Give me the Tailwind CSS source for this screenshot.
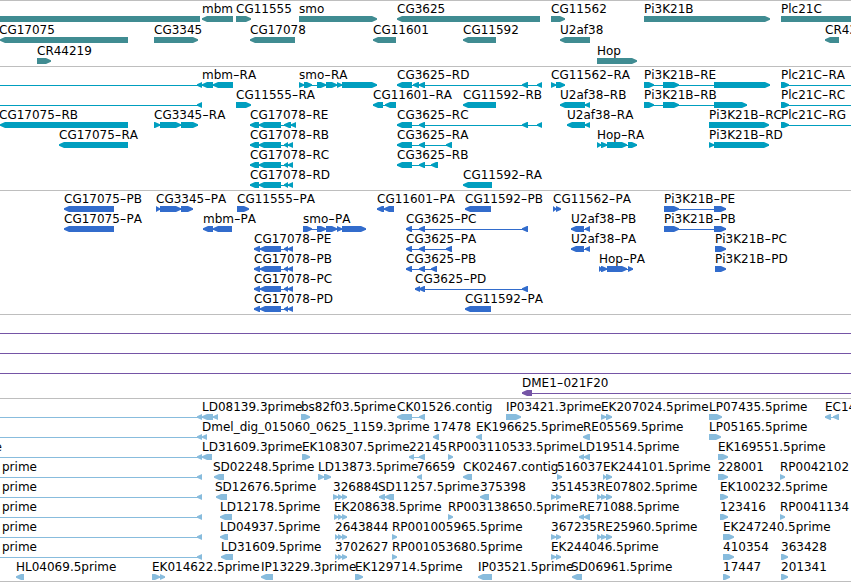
<!DOCTYPE html>
<html lang="en">
<head>
    <meta charset="UTF-8">
    <meta name="viewport" content="width=device-width, initial-scale=1.0">
    <title>Genome Browser</title>
    <script src="https://cdn.jsdelivr.net/npm/@tailwindcss/browser@4"></script>
</head>
<body class="bg-white overflow-hidden">

    <!-- Track list -->
    <main class="flex flex-col w-[851px] h-[582px] overflow-hidden font-['DejaVu_Sans',sans-serif] text-[12px] text-black [font-kerning:none]">
        <section class="shrink-0 h-[66px] border-t border-[#bebebe] text-[#408c92]" data-track="genes"></section>
        <section class="shrink-0 h-[124px] border-t border-[#bebebe] text-[#009ebf]" data-track="transcripts"></section>
        <section class="shrink-0 h-[124px] border-t border-[#bebebe] text-[#326ccc]" data-track="proteins"></section>
        <section class="shrink-0 h-[84px] border-t border-[#bebebe] text-[#7555a6]" data-track="clones"></section>
        <section class="shrink-0 h-[184px] border-y border-[#bebebe] text-[#88bcdd]" data-track="ests"></section>
    </main>

    <script>
        // Feature: [label, direction, [[start, end], ...], lineEnd?, lineStart?, labelX?]
        // direction: -1 left, 1 right, 0 plain bar
        const offLeft = (label) => [label, -1, [[197, 202]], 202, 0, label === 'e' ? -5.5 : 2];
        const cg17078r = (name, end) => [name, -1, [[250, 259], [259, 281], [284, end - 5], [end - 5, end]]];
        const cg17078p = (name) => [name, -1, [[254, 260], [260, 281], [284, 288], [288, 293]]];
        const plc = (name) => [name, 1, [[781, 789]], 851];

        const tracks = {
            genes: { pitch: 21, rows: [
                [['', 0, [[0, 200]]], ['mbm', -1, [[202, 233]]], ['CG11555', 1, [[236, 251]]], ['smo', 1, [[299, 377]]],
                 ['CG3625', -1, [[397, 540]]], ['CG11562', 1, [[551, 565]]], ['Pi3K21B', 1, [[644, 770]]], ['Plc21C', 0, [[781, 851]]]],
                [['CG17075', -1, [[0, 128]], 0, 0, -1], ['CG3345', 1, [[154, 198]]], ['CG17078', -1, [[250, 295]]], ['CG11601', -1, [[373, 396]]],
                 ['CG11592', -1, [[463, 496]]], ['U2af38', -1, [[560, 590]]], ['CR43', -1, [[825, 839]]]],
                [['CR44219', 1, [[37, 51]]], ['Hop', 1, [[597, 637]]]],
            ]},
            transcripts: { pitch: 20, rows: [
                [offLeft(''), ['mbm-RA', -1, [[202, 213], [213, 233]]],
                 ['smo-RA', 1, [[299, 304], [304, 312], [317, 326], [326, 337], [337, 342], [342, 377]]],
                 ['CG3625-RD', -1, [[397, 412], [413, 419], [419, 425], [522, 528], [537, 542]]],
                 ['CG11562-RA', 1, [[551, 556], [556, 565]]],
                 ['Pi3K21B-RE', 1, [[644, 654], [663, 679], [714, 770]]], plc('Plc21C-RA')],
                [offLeft(''), ['CG11555-RA', 1, [[236, 251]]], ['CG11601-RA', -1, [[373, 383], [385, 396]]], ['CG11592-RB', -1, [[463, 496]]],
                 ['U2af38-RB', -1, [[560, 585], [585, 590]]], ['Pi3K21B-RB', 1, [[644, 654], [663, 679], [714, 747]]], plc('Plc21C-RC')],
                [['CG17075-RB', -1, [[0, 128]], 0, 0, -1], ['CG3345-RA', 1, [[154, 160], [160, 181], [181, 198]]], cg17078r('CG17078-RE', 296),
                 ['CG3625-RC', -1, [[397, 412], [419, 425], [522, 528], [537, 542]]], ['U2af38-RA', -1, [[567, 585], [585, 590]]],
                 ['Pi3K21B-RC', 1, [[709, 769]]], plc('Plc21C-RG')],
                [['CG17075-RA', -1, [[59, 128]]], cg17078r('CG17078-RB', 293), ['CG3625-RA', -1, [[397, 412], [419, 425], [446, 452]]],
                 ['Hop-RA', 1, [[597, 601], [601, 607], [607, 627], [628, 637]]], ['Pi3K21B-RD', 1, [[709, 714], [714, 769]]]],
                [cg17078r('CG17078-RC', 293), ['CG3625-RB', -1, [[397, 412], [419, 425], [431, 438]]]],
                [cg17078r('CG17078-RD', 293), ['CG11592-RA', -1, [[463, 492]]]],
            ]},
            proteins: { pitch: 20, rows: [
                [['CG17075-PB', -1, [[64, 114]]], ['CG3345-PA', 1, [[156, 160], [160, 181], [181, 193]]], ['CG11555-PA', 1, [[237, 249]]],
                 ['CG11601-PA', -1, [[377, 384], [384, 394]]], ['CG11592-PB', -1, [[465, 491]]], ['CG11562-PA', 1, [[553, 556], [556, 561]]],
                 ['Pi3K21B-PE', 1, [[664, 679], [714, 726]]]],
                [['CG17075-PA', -1, [[64, 114]]], ['mbm-PA', -1, [[203, 213], [213, 232]]],
                 ['smo-PA', 1, [[303, 312], [317, 326], [326, 337], [337, 342], [342, 366]]],
                 ['CG3625-PC', -1, [[406, 412], [419, 425], [522, 528]]], ['U2af38-PB', -1, [[571, 584], [585, 590]]],
                 ['Pi3K21B-PB', 1, [[664, 679], [714, 726]]]],
                [cg17078p('CG17078-PE'), ['CG3625-PA', -1, [[406, 412], [419, 425], [446, 452]]],
                 ['U2af38-PA', -1, [[571, 584], [585, 590]]], ['Pi3K21B-PC', 1, [[715, 726]]]],
                [cg17078p('CG17078-PB'), ['CG3625-PB', -1, [[406, 412], [419, 425], [431, 437]]],
                 ['Hop-PA', 1, [[599, 602], [601, 607], [607, 627], [628, 633]]], ['Pi3K21B-PD', 1, [[715, 726]]]],
                [cg17078p('CG17078-PC'), ['CG3625-PD', -1, [[415, 420], [419, 425], [522, 528]]]],
                [cg17078p('CG17078-PD'), ['CG11592-PA', -1, [[465, 491]]]],
            ]},
            clones: { pitch: 20, rows: [
                [['', 0, [], 851, 0]],
                [['', 0, [], 851, 0]],
                [['', 0, [], 851, 0]],
                [['DME1-021F20', -1, [[522, 532]], 851]],
            ]},
            ests: { pitch: 20, rows: [
                [offLeft(''), ['LD08139.3prime', -1, [[202, 213], [213, 218]]], ['bs82f03.5prime', 1, [[301, 310]]],
                 ['CK01526.contig', -1, [[397, 412], [419, 425]]], ['IP03421.3prime', 1, [[506, 521]]],
                 ['EK207024.5prime', 1, [[601, 606], [606, 612]]], ['LP07435.5prime', 1, [[709, 722]]], ['EC14', -1, [[825, 831], [833, 839]]]],
                [offLeft(''), ['Dmel_dig_015060_0625_1159.3prime', -1, [[202, 207]]], ['17478', -1, [[433, 439]]],
                 ['EK196625.5prime', -1, [[476, 482]]], ['RE05569.5prime', -1, [[583, 590]]], ['LP05165.5prime', 1, [[709, 721]]]],
                [offLeft('e'), ['LD31609.3prime', -1, [[202, 212]]], ['EK108307.5prime', 1, [[302, 310]]], ['22145', -1, [[409, 414], [419, 425]]],
                 ['RP003110533.5prime', 1, [[448, 453]]], ['LD19514.5prime', -1, [[579, 584], [584, 590]]], ['EK169551.5prime', 1, [[718, 728]]]],
                [offLeft('prime'), ['SD02248.5prime', -1, [[214, 224]], 0, 0, 213], ['LD13873.5prime', 1, [[318, 324], [324, 331]]], ['76659', -1, [[417, 422]]],
                 ['CK02467.contig', -1, [[463, 472]]], ['516037', 1, [[557, 562]]], ['EK244101.5prime', 1, [[603, 606], [606, 612]]],
                 ['228001', 1, [[718, 728]]], ['RP0042102', 1, [[780, 785]]]],
                [offLeft('prime'), ['SD12676.5prime', -1, [[216, 227]], 0, 0, 215], ['326884', 1, [[333, 338], [338, 342], [342, 347]]],
                 ['SD11257.5prime', -1, [[379, 385], [385, 394]], 0, 379, 378], ['375398', -1, [[480, 489]]], ['351453', 1, [[551, 556], [556, 561]]],
                 ['RE07802.5prime', 1, [[597, 601], [601, 606], [606, 612]]], ['EK100232.5prime', 1, [[720, 728]]]],
                [offLeft('prime'), ['LD12178.5prime', -1, [[220, 232]]], ['EK208638.5prime', 1, [[334, 338], [338, 342], [342, 347]]],
                 ['RP003138650.5prime', 1, [[448, 453]]], ['RE71088.5prime', -1, [[579, 584], [584, 590]]],
                 ['123416', 1, [[720, 728]]], ['RP0041134', 1, [[780, 785]]]],
                [offLeft('prime'), ['LD04937.5prime', -1, [[220, 228]]], ['2643844', 1, [[335, 338], [338, 342], [342, 347]]],
                 ['RP001005965.5prime', 1, [[392, 397]]], ['367235', 1, [[551, 556], [556, 561]]],
                 ['RE25960.5prime', 1, [[597, 601], [601, 606], [606, 612]]], ['EK247240.5prime', 1, [[723, 734]]]],
                [offLeft('prime'), ['LD31609.5prime', -1, [[221, 233]]], ['3702627', 1, [[335, 338], [338, 342], [342, 347]]],
                 ['RP001053680.5prime', 1, [[392, 397]]], ['EK244046.5prime', 1, [[551, 556], [556, 561]]],
                 ['410354', 1, [[723, 734]]], ['363428', 1, [[781, 788]]]],
                [['HL04069.5prime', -1, [[16, 24]]], ['EK014622.5prime', 1, [[152, 160], [160, 165]]], ['IP13229.3prime', -1, [[261, 273]]],
                 ['EK129714.5prime', 1, [[355, 363]]], ['IP03521.5prime', -1, [[478, 492]]], ['SD06961.5prime', -1, [[572, 582]], 0, 0, 571],
                 ['17447', 1, [[723, 730]]], ['201341', 1, [[781, 788]]]],
            ]},
        };

        function drawExon(dir, [a, b], y) {
            if (!dir) return `<rect x="${a}" y="${y}" width="${b - a}" height="6" fill="currentColor"/>`;
            const h = Math.min(5, b - a);
            const [tip, back] = dir > 0 ? [b, a] : [a, b];
            const neck = tip - dir * h;
            const points = [[back, y], [neck, y], [tip, y + 2.2], [tip, y + 3.8], [neck, y + 6], [back, y + 6]];
            return `<polygon points="${points.join(' ')}" fill="currentColor"/>`;
        }

        function drawLabel(label, x, y) {
            // widened hyphen between gene name and isoform
            const text = label.replace('-', '<tspan textLength="6.6" lengthAdjust="spacingAndGlyphs">-</tspan>');
            return `<text x="${x}" y="${y}" class="fill-black">${text}</text>`;
        }

        function drawFeature([label, dir, exons, lineEnd, lineStart, labelX], y) {
            const start = lineStart ?? exons[0][0];
            const end = lineEnd || (exons.length ? exons[exons.length - 1][1] : 0);
            let out = '';
            if (end && (exons.length > 1 || lineEnd)) {
                out += `<rect x="${start}" y="${y + 3}" width="${end - start}" height="1" fill="currentColor"/>`;
            }
            out += exons.map((exon) => drawExon(dir, exon, y)).join('');
            if (label) out += drawLabel(label, labelX ?? exons[0][0], y - 3);
            return out;
        }

        document.querySelectorAll('[data-track]').forEach((el) => {
            const { pitch, rows } = tracks[el.dataset.track];
            // the top border takes the first pixel of each track
            const body = rows.map((row, i) => row.map((f) => drawFeature(f, 15 + i * pitch)).join('')).join('');
            el.innerHTML = `<svg class="block w-full h-full overflow-hidden">${body}</svg>`;
        });
    </script>
</body>
</html>
